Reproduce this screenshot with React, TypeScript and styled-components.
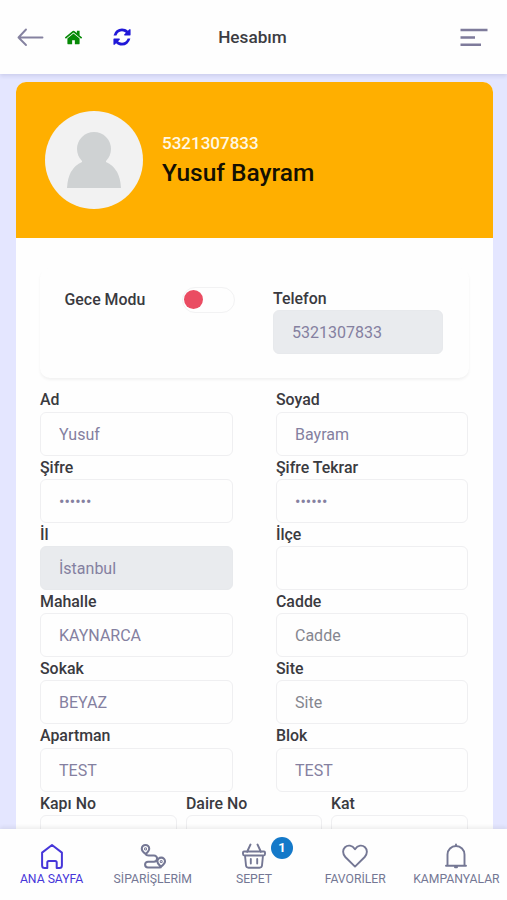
import React from "react";
import styled, { createGlobalStyle } from "styled-components";

const Global = createGlobalStyle`
  *, *::before, *::after { box-sizing: border-box; }
  html, body { margin: 0; height: 100%; overflow: hidden; }
  body { font-family: Roboto, "Noto Sans", sans-serif; background: #e4e6ff; }
`;

const Page = styled.div`
  display: flex;
  flex-direction: column;
  height: 900px;
  overflow: hidden;
  background: #e4e6ff;
`;

const Header = styled.header`
  display: grid;
  grid-template-columns: 1fr auto 1fr;
  align-items: center;
  flex: none;
  height: 74px;
  padding: 0 19px 0 17px;
  background: #fefefe;
  box-shadow: 0 2px 4px rgba(60, 60, 120, 0.14);
  z-index: 1;
`;

const HeaderActions = styled.div<{ $end?: boolean }>`
  display: flex;
  align-items: center;
  justify-content: ${(p) => (p.$end ? "flex-end" : "flex-start")};
`;

const IconButton = styled.button<{ $gap?: number; $color: string }>`
  display: flex;
  padding: 0;
  margin: 0 0 0 ${(p) => p.$gap ?? 0}px;
  border: 0;
  background: none;
  color: ${(p) => p.$color};
`;

const Title = styled.h1`
  margin: 0;
  font-size: 17.2px;
  line-height: 22px;
  font-weight: 500;
  color: #3c3c42;
`;

const Main = styled.main`
  flex: 1;
  min-height: 0;
  overflow: hidden;
  padding: 8px 14.5px 0 15.5px;
`;

const Card = styled.section`
  height: 900px;
  border-radius: 10px 10px 0 0;
  background: #fefefe;
  overflow: hidden;
`;

const Profile = styled.div`
  display: flex;
  align-items: center;
  gap: 19.5px;
  height: 156px;
  padding-left: 29px;
  background: #ffaf00;
`;

const Avatar = styled.svg`
  display: block;
  width: 98px;
  height: 98px;
`;

const Phone = styled.div`
  margin-top: 1px;
  font-size: 17px;
  line-height: 24px;
  font-weight: 500;
  color: #fff8e4;
`;

const Name = styled.div`
  font-size: 24.5px;
  line-height: 34px;
  font-weight: 500;
  color: #141003;
  margin-top: 1px;
`;

const Body = styled.div`
  padding: 30px 24.5px 0;
`;

const Settings = styled.div`
  display: grid;
  grid-template-columns: 117.5px 91px 170px;
  align-items: start;
  height: 110px;
  margin: 0 -1px 10.4px -0.5px;
  padding: 19px 0 0 25px;
  border-radius: 10px;
  background: #fefefe;
  box-shadow: 0 2px 3px rgba(0, 0, 0, 0.05);
`;

const Label = styled.label`
  display: block;
  height: 23.2px;
  line-height: 23.2px;
  font-size: 15.9px;
  font-weight: 500;
  color: #3a3a40;
  white-space: nowrap;
`;

const Switch = styled.button`
  display: flex;
  align-items: center;
  width: 53px;
  height: 26px;
  margin-top: -0.5px;
  padding: 0 0 0 1px;
  border: 1px solid #f2f2f3;
  border-radius: 13px;
  background: #fefefe;
`;

const Knob = styled.span`
  width: 19px;
  height: 19px;
  border-radius: 50%;
  background: #ea4c62;
`;

const SwitchLabel = styled(Label)`
  margin-top: 1px;
`;

const Grid = styled.div<{ $cols: string; $gap: string }>`
  display: grid;
  grid-template-columns: ${(p) => p.$cols};
  column-gap: ${(p) => p.$gap};
`;

const Input = styled.input`
  display: block;
  width: 100%;
  height: 44px;
  padding: 1px 18px 0;
  border: 1px solid #efeff1;
  border-radius: 6px;
  outline: 0;
  background: #fefefe;
  font: 400 16px Roboto, "Noto Sans", sans-serif;
  color: #8480a0;
  &::placeholder { color: #85868f; opacity: 1; }
  &:disabled { background: #e9ebee; border-color: #e7e9ec; }
`;

const Nav = styled.nav`
  display: grid;
  grid-template-columns: repeat(5, 1fr);
  flex: none;
  height: 71px;
  padding: 0 0 0 1px;
  background: #fefefe;
  box-shadow: 0 -2px 4px rgba(0, 0, 0, 0.07);
  z-index: 1;
`;

const NavItem = styled.a<{ $active?: boolean }>`
  display: flex;
  flex-direction: column;
  align-items: center;
  padding-top: 14px;
  font-size: 12.2px;
  line-height: 16px;
  white-space: nowrap;
  color: ${(p) => (p.$active ? "#4636d9" : "#747794")};
`;

const NavIcon = styled.span`
  position: relative;
  display: flex;
  height: 28px;
`;

const Badge = styled.span`
  position: absolute;
  left: 30px;
  top: -6px;
  width: 22px;
  height: 22px;
  border-radius: 50%;
  background: #1479c9;
  color: #fff;
  font-size: 13px;
  line-height: 22px;
  font-weight: 700;
  text-align: center;
`;

const line = { fill: "none", stroke: "currentColor", strokeLinecap: "round", strokeLinejoin: "round" } as const;

const HomeIcon = () => (
  <svg width="26" height="28" viewBox="0 0 26 28" strokeWidth="2" {...line}>
    <path d="M13 2 3.1 9.6V22.5Q3.1 25 5.6 25H8.3V19.5Q8.3 18 9.8 18H16.2Q17.7 18 17.7 19.5V25H20.4Q22.9 25 22.9 22.5V9.6Z" />
  </svg>
);

const RouteIcon = () => (
  <svg width="26" height="28" viewBox="0 0 26 28" strokeWidth="2.1" {...line}>
    <path d="M5.6 11C3 8.9 1.8 7.5 1.8 5.7a3.7 3.7 0 0 1 7.4 0C9.2 7.5 8 8.900 5.600 11ZM21 23.700C18.800 21.600 17.400 20.200 17.400 18.400a3.800 3.800 0 0 1 7.600 0C25 20.200 23.500 21.600 21 23.700ZM5.600 11Q6.200 12.500 8.500 12.500H14a3.100 3.100 0 0 1 0 6.200H8a2.900 2.900 0 0 0 0 5.800H19.500Q21 24.500 21 23.700" />
    <circle cx="5.500" cy="5.900" r=".5" />
    <circle cx="21.200" cy="18.500" r=".5" />
  </svg>
);

const BasketIcon = () => (
  <svg width="26" height="28" viewBox="0 0 26 28" strokeWidth="1.900" {...line}>
    <path d="M6 9 9.500 1.500M20 9 16.500 1.500M3 8.500H23Q24 8.500 24 9.500V11Q24 12.500 22.500 12.500H3.500Q2 12.500 2 11V9.500Q2 8.500 3 8.500ZM4 12.500 5 22.500Q5.200 24.700 7.500 24.700H18.500Q20.800 24.700 21 22.500L22 12.500M9.800 16V20.500M16.200 16V20.500" />
  </svg>
);

const HeartIcon = () => (
  <svg width="26" height="28" viewBox="0 0 26 28" strokeWidth="1.900" {...line}>
    <path d="M13 23.600 3.300 14C.4 10.800.500 6.600 3 4.200 5.700 1.700 10.200 1.900 13 6.300 15.800 1.900 20.300 1.700 23 4.200 25.500 6.600 25.600 10.800 22.700 14Z" />
  </svg>
);

const BellIcon = () => (
  <svg width="26" height="28" viewBox="0 0 26 28" strokeWidth="1.900" {...line}>
    <path d="M4.500 22.700V11.500a8.500 8.500 0 0 1 17 0V22.700M3 22.800H23M13 1.500V3M12 24.200H14" />
  </svg>
);

type FieldProps = { label: string; value?: string; placeholder?: string; type?: string; disabled?: boolean };

const Field = ({ label, value, placeholder, type = "text", disabled }: FieldProps) => (
  <div>
    <Label>{label}</Label>
    <Input type={type} defaultValue={value} placeholder={placeholder} disabled={disabled} aria-label={label} />
  </div>
);

const fields: FieldProps[] = [
  { label: "Ad", value: "Yusuf" },
  { label: "Soyad", value: "Bayram" },
  { label: "Şifre", value: "123456", type: "password" },
  { label: "Şifre Tekrar", value: "123456", type: "password" },
  { label: "İl", value: "İstanbul", disabled: true },
  { label: "İlçe" },
  { label: "Mahalle", value: "KAYNARCA" },
  { label: "Cadde", placeholder: "Cadde" },
  { label: "Sokak", value: "BEYAZ" },
  { label: "Site", placeholder: "Site" },
  { label: "Apartman", value: "TEST" },
  { label: "Blok", value: "TEST" },
];

const tabs = [
  { label: "ANA SAYFA", icon: <HomeIcon />, active: true },
  { label: "SİPARİŞLERİM", icon: <RouteIcon /> },
  { label: "SEPET", icon: <BasketIcon />, badge: 1 },
  { label: "FAVORİLER", icon: <HeartIcon /> },
  { label: "KAMPANYALAR", icon: <BellIcon /> },
];

export default function App() {
  return (
    <>
      <Global />
      <Page>
        <Header>
          <HeaderActions>
            <IconButton $color="#8582a0" aria-label="Geri">
              <svg width="27" height="20" viewBox="0 0 27 20" strokeWidth="1.900" {...line}>
                <path d="M25.500 10.500H1.500M9 2.500 1.500 10.500 9 18" />
              </svg>
            </IconButton>
            <IconButton $color="#078a07" $gap={20} aria-label="Ana sayfa">
              <svg width="19" height="19" viewBox="0 0 1792 1792" fill="currentColor">
                <path d="M1472 992v480q0 26-19 45t-45 19h-384v-384h-256v384h-384q-26 0-45-19t-19-45v-480q0-1 .5-3t.5-3l575-474 575 474q1 2 1 6zm223-69l-62 74q-8 9-21 11h-3q-13 0-21-7l-692-577-692 577q-12 8-24 7-13-2-21-11l-62-74q-8-10-7-23.5t11-21.5l719-599q32-26 76-26t76 26l244 204v-195q0-14 9-23t23-9h192q14 0 23 9t9 23v408l219 182q10 8 11 21.5t-7 23.5z" />
              </svg>
            </IconButton>
            <IconButton $color="#2018d8" $gap={28.5} aria-label="Yenile">
              <svg width="20" height="20" viewBox="0 0 1792 1792" fill="currentColor">
                <path d="M1639 1056q0 5-1 7-64 268-268 434.500t-478 166.500q-146 0-282.500-55t-243.500-157l-129 129q-19 19-45 19t-45-19-19-45v-448q0-26 19-45t45-19h448q26 0 45 19t19 45-19 45l-137 137q71 66 161 102t187 36q134 0 250-65t186-179q11-17 53-117 8-23 30-23h192q13 0 22.500 9.500t9.500 22.500zm25-800v448q0 26-19 45t-45 19h-448q-26 0-45-19t-19-45 19-45l138-138q-148-137-349-137-134 0-250 65t-186 179q-11 17-53 117-8 23-30 23h-199q-13 0-22.500-9.500t-9.500-22.500v-7q65-268 270-434.500t480-166.500q146 0 284 55.500t245 156.500l130-129q19-19 45-19t45 19 19 45z" />
              </svg>
            </IconButton>
          </HeaderActions>
          <Title>Hesabım</Title>
          <HeaderActions $end>
            <IconButton $color="#7e7b9b" aria-label="Menü">
              <svg width="28" height="20" viewBox="0 0 28 20" fill="none" stroke="currentColor" strokeWidth="2.400">
                <path d="M.5 3H27.500M.5 10.500H15M.5 17.800H21" />
              </svg>
            </IconButton>
          </HeaderActions>
        </Header>
        <Main>
          <Card>
            <Profile>
              <Avatar viewBox="0 0 98 98">
                <circle cx="49" cy="49" r="49" fill="#f2f2f2" />
                <circle cx="49" cy="38" r="17" fill="#cfd2d3" />
                <path d="M37 46H61V51Q75 57 76 77H22Q23 57 37 51Z" fill="#cfd2d3" />
              </Avatar>
              <div>
                <Phone>5321307833</Phone>
                <Name>Yusuf Bayram</Name>
              </div>
            </Profile>
            <Body>
              <Settings>
                <SwitchLabel>Gece Modu</SwitchLabel>
                <Switch role="switch" aria-checked={false} aria-label="Gece Modu">
                  <Knob />
                </Switch>
                <Field label="Telefon" value="5321307833" disabled />
              </Settings>
              <Grid $cols="193px 192px" $gap="43px">
                {fields.map((f) => (
                  <Field key={f.label} {...f} />
                ))}
              </Grid>
              <Grid $cols="137px 136px 137px" $gap="9px">
                <Field label="Kapı No" />
                <Field label="Daire No" />
                <Field label="Kat" />
              </Grid>
            </Body>
          </Card>
        </Main>
        <Nav>
          {tabs.map((t) => (
            <NavItem key={t.label} $active={t.active}>
              <NavIcon>
                {t.icon}
                {t.badge && <Badge>{t.badge}</Badge>}
              </NavIcon>
              {t.label}
            </NavItem>
          ))}
        </Nav>
      </Page>
    </>
  );
}
